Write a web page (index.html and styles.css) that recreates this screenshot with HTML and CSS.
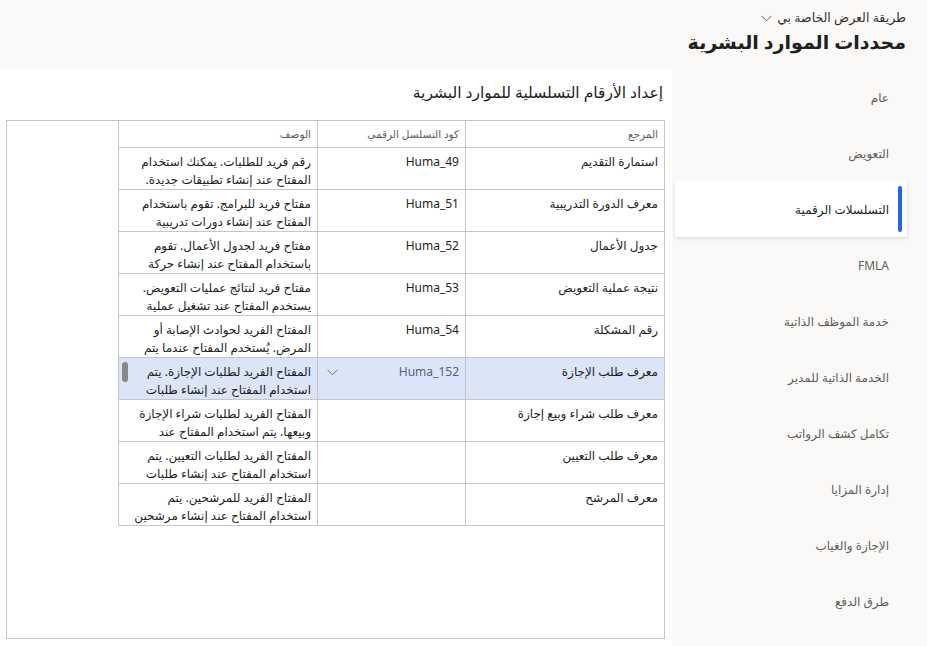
FILE: index.html
```html
<!DOCTYPE html>
<html lang="ar" dir="rtl">
<head>
<meta charset="utf-8">
<title>محددات الموارد البشرية</title>
<link rel="stylesheet" href="styles.css">
</head>
<body>
<header class="page-head">
  <div class="view-picker">
    <span>طريقة العرض الخاصة بي</span>
    <svg class="chev" width="11" height="7" viewBox="0 0 11 7"><path d="M0.5 0.8 L5.5 5.8 L10.5 0.8" fill="none" stroke="#605e5c" stroke-width="1"/></svg>
  </div>
  <h1 class="page-title">محددات الموارد البشرية</h1>
</header>
<div class="layout">
  <nav class="side-nav">
    <div class="nav-item">عام</div>
    <div class="nav-item">التعويض</div>
    <div class="nav-item active">التسلسلات الرقمية</div>
    <div class="nav-item">FMLA</div>
    <div class="nav-item">خدمة الموظف الذاتية</div>
    <div class="nav-item">الخدمة الذاتية للمدير</div>
    <div class="nav-item">تكامل كشف الرواتب</div>
    <div class="nav-item">إدارة المزايا</div>
    <div class="nav-item">الإجازة والغياب</div>
    <div class="nav-item">طرق الدفع</div>
  </nav>
  <main class="content">
    <h2 class="section-title">إعداد الأرقام التسلسلية للموارد البشرية</h2>
    <div class="grid-box">
      <div class="grid">
        <div class="cell head">المرجع</div>
        <div class="cell head">كود التسلسل الرقمي</div>
        <div class="cell head">الوصف</div>

        <div class="cell">استمارة التقديم</div>
        <div class="cell code">Huma_49</div>
        <div class="cell desc">رقم فريد للطلبات. يمكنك استخدام المفتاح عند إنشاء تطبيقات جديدة.</div>

        <div class="cell">معرف الدورة التدريبية</div>
        <div class="cell code">Huma_51</div>
        <div class="cell desc">مفتاح فريد للبرامج. تقوم باستخدام المفتاح عند إنشاء دورات تدريبية</div>

        <div class="cell">جدول الأعمال</div>
        <div class="cell code">Huma_52</div>
        <div class="cell desc">مفتاح فريد لجدول الأعمال. تقوم باستخدام المفتاح عند إنشاء حركة</div>

        <div class="cell">نتيجة عملية التعويض</div>
        <div class="cell code">Huma_53</div>
        <div class="cell desc">مفتاح فريد لنتائج عمليات التعويض. يستخدم المفتاح عند تشغيل عملية</div>

        <div class="cell">رقم المشكلة</div>
        <div class="cell code">Huma_54</div>
        <div class="cell desc">المفتاح الفريد لحوادث الإصابة أو المرض. يُستخدم المفتاح عندما يتم</div>

        <div class="cell sel">معرف طلب الإجازة</div>
        <div class="cell code sel code-input">
          <span>Huma_152</span>
          <svg class="cell-chev" width="11" height="7" viewBox="0 0 11 7"><path d="M0.5 0.8 L5.5 5.8 L10.5 0.8" fill="none" stroke="#6b7593" stroke-width="1"/></svg>
        </div>
        <div class="cell desc sel">المفتاح الفريد لطلبات الإجازة. يتم استخدام المفتاح عند إنشاء طلبات<span class="thumb"></span></div>

        <div class="cell">معرف طلب شراء وبيع إجازة</div>
        <div class="cell code"></div>
        <div class="cell desc">المفتاح الفريد لطلبات شراء الإجازة وبيعها. يتم استخدام المفتاح عند</div>

        <div class="cell">معرف طلب التعيين</div>
        <div class="cell code"></div>
        <div class="cell desc">المفتاح الفريد لطلبات التعيين. يتم استخدام المفتاح عند إنشاء طلبات</div>

        <div class="cell">معرف المرشح</div>
        <div class="cell code"></div>
        <div class="cell desc">المفتاح الفريد للمرشحين. يتم استخدام المفتاح عند إنشاء مرشحين</div>
      </div>
    </div>
  </main>
</div>
</body>
</html>
```
FILE: styles.css
```css
* { box-sizing: border-box; }
html, body { margin: 0; padding: 0; }
body {
  background: #faf9f8;
  font-family: "Noto Sans", "DejaVu Sans", sans-serif;
  color: #201f1e;
  width: 927px;
  height: 646px;
  overflow: hidden;
}
.page-head {
  height: 69px;
  padding: 9px 21px 0 0;
}
.view-picker {
  display: flex;
  align-items: center;
  gap: 5px;
  font-size: 12.5px;
  line-height: 18px;
  color: #323130;
}
.chev { margin-top: 1px; }
.page-title {
  margin: 1px 0 0;
  font-size: 19px;
  line-height: 28px;
  font-weight: 600;
  color: #201f1e;
}
.layout {
  display: flex;
  height: 577px;
}
.side-nav {
  width: 252px;
  padding-right: 20px;
  display: flex;
  flex-direction: column;
}
.nav-item {
  height: 56px;
  display: flex;
  align-items: center;
  padding-right: 18px;
  font-size: 12px;
  color: #605e5c;
  position: relative;
}
.nav-item.active {
  background: #ffffff;
  color: #201f1e;
  box-shadow: 0 1.6px 3.6px rgba(0,0,0,0.13), 0 0.3px 0.9px rgba(0,0,0,0.11);
}
.nav-item.active::before {
  content: "";
  position: absolute;
  right: 5px;
  top: 5px;
  bottom: 5px;
  width: 4px;
  border-radius: 2px;
  background: #2266e3;
}
.content {
  width: 672px;
  margin-right: 3px;
  background: #ffffff;
  padding: 12px 7px 0 0;
}
.section-title {
  margin: 0 0 17px;
  padding-right: 2px;
  font-size: 15.5px;
  line-height: 22px;
  font-weight: normal;
  color: #201f1e;
}
.grid-box {
  width: 659px;
  height: 519px;
  border: 1px solid #c8c6c4;
}
.grid {
  display: grid;
  grid-template-columns: 199px 148px 199px;
  grid-auto-rows: 42px;
  grid-template-rows: 27px;
  width: 546px;
}
.cell {
  border-left: 1px solid #c8c6c4;
  border-bottom: 1px solid #c8c6c4;
  padding: 5px 6px 0 5px;
  font-size: 12px;
  line-height: 18px;
  color: #201f1e;
  overflow: hidden;
  position: relative;
}
.cell.head {
  padding-top: 0;
  display: flex;
  align-items: center;
  font-size: 10.5px;
  color: #605e5c;
}
.cell.sel { background: #dbe5f7; }
.code { direction: ltr; text-align: right; padding-right: 6px; }
.code-input {
  display: flex;
  flex-direction: row-reverse;
  justify-content: space-between;
  align-items: flex-start;
  color: #56617f;
  padding-left: 9px;
}
.cell-chev { margin-top: 6px; }
.thumb {
  position: absolute;
  left: 3px;
  top: 4px;
  width: 6px;
  height: 20px;
  border-radius: 3px;
  background: #8a8886;
}
```
